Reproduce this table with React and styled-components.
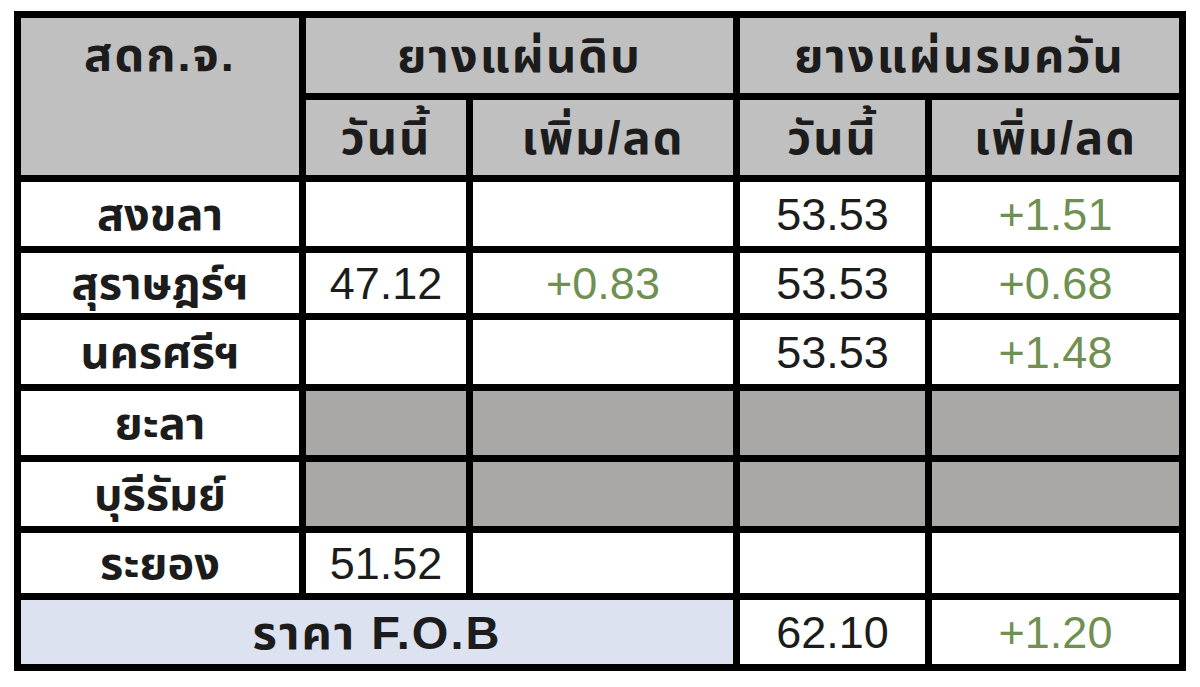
import React from 'react'
import styled, { createGlobalStyle } from 'styled-components'

const GlobalStyle = createGlobalStyle`
    body {
        margin: 0;
        background: #ffffff;
        font-family: Tahoma, "Liberation Sans", "Noto Sans Thai", "Noto Sans", sans-serif;
    }
`

const Page = styled.div`
    padding: 11px 0 0 14px;
`

const Grid = styled.div`
    display: grid;
    grid-template-columns: 278px 160px 260px 185px 247px;
    grid-template-rows: 75px 75px 64px 60px 64px 64px 64px 60px 64px;
    gap: 7px;
    padding: 7px;
    background: #000000;
    width: max-content;
`

const Cell = styled.div`
    display: flex;
    align-items: ${props => props.top ? 'flex-start' : 'center'};
    justify-content: center;
    background: ${props => props.bg || '#ffffff'};
    color: ${props => props.green ? '#6f9050' : '#1c1c1c'};
    font-size: ${props => props.spaced ? '47px' : '45px'};
    line-height: 1;
    font-weight: ${props => props.bold ? 700 : 400};
    letter-spacing: ${props => props.spaced ? '2px' : '0'};
    grid-column: ${props => props.col || 'auto'};
    grid-row: ${props => props.row || 'auto'};
    padding-top: ${props => props.top ? '13px' : '0'};
    white-space: nowrap;
`

const HEAD = '#c0c0c0'
const SHADE = '#aaa8a6'
const FOB = '#dce2f0'

const rows = [
    { name: 'สงขลา', raw: '', rawDiff: '', smoke: '53.53', smokeDiff: '+1.51' },
    { name: 'สุราษฎร์ฯ', raw: '47.12', rawDiff: '+0.83', smoke: '53.53', smokeDiff: '+0.68' },
    { name: 'นครศรีฯ', raw: '', rawDiff: '', smoke: '53.53', smokeDiff: '+1.48' },
    { name: 'ยะลา', shaded: true },
    { name: 'บุรีรัมย์', shaded: true },
    { name: 'ระยอง', raw: '51.52', rawDiff: '', smoke: '', smokeDiff: '' },
]

export default function App() {
    return (
        <>
            <GlobalStyle />
            <Page>
                <Grid>
                    <Cell bg={HEAD} bold spaced top row="1 / 3">สดก.จ.</Cell>
                    <Cell bg={HEAD} bold spaced col="2 / 4">ยางแผ่นดิบ</Cell>
                    <Cell bg={HEAD} bold spaced col="4 / 6">ยางแผ่นรมควัน</Cell>
                    <Cell bg={HEAD} bold spaced>วันนี้</Cell>
                    <Cell bg={HEAD} bold spaced>เพิ่ม/ลด</Cell>
                    <Cell bg={HEAD} bold spaced>วันนี้</Cell>
                    <Cell bg={HEAD} bold spaced>เพิ่ม/ลด</Cell>

                    {rows.map(r => (
                        <React.Fragment key={r.name}>
                            <Cell bold>{r.name}</Cell>
                            <Cell bg={r.shaded ? SHADE : undefined}>{r.raw}</Cell>
                            <Cell bg={r.shaded ? SHADE : undefined} green>{r.rawDiff}</Cell>
                            <Cell bg={r.shaded ? SHADE : undefined}>{r.smoke}</Cell>
                            <Cell bg={r.shaded ? SHADE : undefined} green>{r.smokeDiff}</Cell>
                        </React.Fragment>
                    ))}

                    <Cell bg={FOB} bold spaced col="1 / 4">ราคา F.O.B</Cell>
                    <Cell>62.10</Cell>
                    <Cell green>+1.20</Cell>
                </Grid>
            </Page>
        </>
    )
}
